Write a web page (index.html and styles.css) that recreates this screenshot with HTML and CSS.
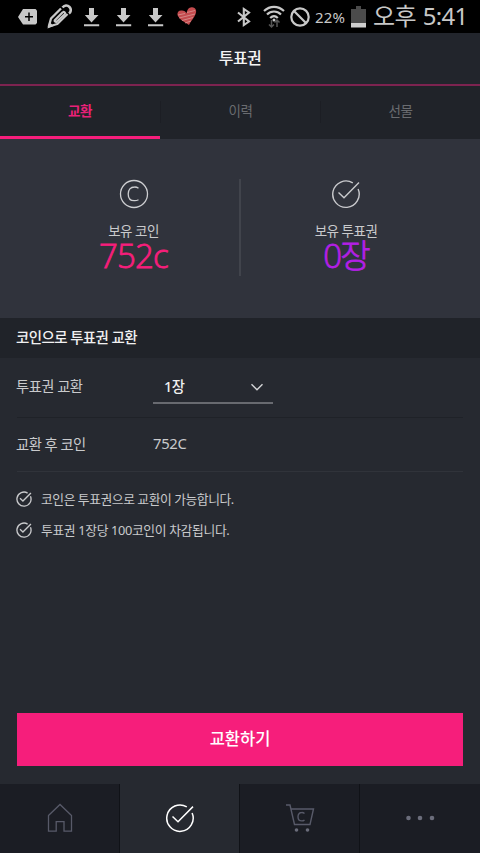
FILE: index.html
```html
<!DOCTYPE html>
<html lang="ko">
<head>
<meta charset="utf-8">
<title>투표권</title>
<link rel="stylesheet" href="styles.css">
</head>
<body>
<svg class="defs" width="0" height="0">
  <symbol id="download" viewBox="0 0 16 20"><path fill="currentColor" d="M5 1h5v7h4.500L7.500 15.500 .8 8H5zM0 17.300h15.200v2H0z"/></symbol>
  <symbol id="check" viewBox="0 0 30 30"><g fill="none" stroke="currentColor"><path d="M21.800 3.900A13.200 13.200 0 1 0 27.100 10"/><path d="M7.500 13.500l5.500 5.200L28 3.600"/></g></symbol>
</svg>
<div class="app">
  <div class="status">
    <div class="status-left">
      <svg width="19" height="16" viewBox="0 0 19 16"><path fill="#c8c8c8" d="M5 0h12.500L19 1.500v12.500l-1.500 1.500H5L0 8z"/><path stroke="#000" stroke-width="1.500" d="M7 7.700h8M11 3.500v8.500"/></svg>
      <svg width="25" height="25" viewBox="0 0 25 25" fill="none" stroke="#c8c8c8" stroke-linejoin="round"><path stroke-width="2.300" d="M14 4.500L4 14.500 1.800 22.500l8.500-2.500L20.500 10"/><path stroke-width="2.200" d="M16 8l-8 8M18 10l-8 7.500M16 8c1-.5 2.500.5 2 2M8 16c-1 1 .5 2.500 2 1.500"/><path stroke-width="2.600" d="M15.500 3.500c2-2.500 5-2.500 7-.5s1.500 5-.5 6.500"/><path d="M.5 24.500l1.800-6.500 4.500 4z" fill="#c8c8c8" stroke="none"/></svg>
      <svg class="dl" width="16" height="20"><use href="#download"/></svg>
      <svg class="dl" width="16" height="20"><use href="#download"/></svg>
      <svg class="dl" width="16" height="20"><use href="#download"/></svg>
      <svg class="heart" width="20" height="19" viewBox="0 0 20 19"><path fill="#c44b4e" d="M12 18C7 15 2 12 .5 8 0 5 2 3 5 3.500c2 0 4 1 4.500 3C10 3 12 0 15 .3c4 .2 5 4 3.500 7C17 11 14 14 12 18z"/><path fill="none" stroke="#dca09d" stroke-width=".7" d="M1 8l7-1.500M10 5.500l8-2M2 11l16-4M5 13.500l11-3M8 16l6-2"/></svg>
    </div>
    <div class="status-right">
      <svg width="14" height="20" viewBox="0 0 14 20"><path fill="none" stroke="#c8c8c8" stroke-width="2.100" d="M1 5.500l11 9L6.800 18V2L12 5.500l-11 9"/></svg>
      <svg class="wifi" width="22" height="24" viewBox="0 0 22 24"><g fill="none" stroke="#c8c8c8" stroke-width="2.200"><path d="M1 6c6-5.500 14-5.500 20 0M4 9.500c4-4 10-4 14 0M7.200 13c2.500-2.500 5.100-2.500 7.600 0"/></g><circle cx="11" cy="15" r="1.500" fill="#c8c8c8"/><path fill="none" stroke="#555" stroke-width="1.500" d="M8.500 15v7M6 19.500L8.500 22l2.500-2.500M14 22v-7M11.500 17.500L14 15l2.500 2.500"/></svg>
      <svg class="ban" width="20" height="20" viewBox="0 0 20 20" fill="none" stroke="#c8c8c8" stroke-width="2.200"><circle cx="10" cy="10" r="8.700"/><path d="M4 4l12 12"/></svg>
      <span class="percent">22%</span>
      <svg class="battery" width="15" height="22" viewBox="0 0 15 22"><path fill="#4b4b4b" d="M5 0h5v3h5v14H0V3h5z"/><path fill="#cfcfcf" d="M0 17h15v4.500H0z"/></svg>
      <span class="clock"><span class="ampm">오후</span>5:41</span>
    </div>
  </div>
  <header class="title"><span>투표권</span></header>
  <nav class="tabs"><span class="tab tab-on">교환</span><i class="tab-line"></i><span class="tab">이력</span><i class="tab-line"></i><span class="tab">선물</span></nav>
  <section class="summary">
    <div class="stat">
      <svg width="30" height="30" viewBox="0 0 30 30" fill="none" stroke="#cdced1" stroke-width="1.300"><circle cx="15" cy="15" r="13.500"/><path d="M19.500 9.300A6.300 6.300 0 0 0 15.500 8C11.500 8 9.200 10.800 9.200 15s2.300 6.700 6 6.700a8 8 0 0 0 4.300-1"/></svg>
      <span class="label">보유 코인</span>
      <span class="value coin">752c</span>
    </div>
    <div class="split"></div>
    <div class="stat">
      <svg class="big-check" width="30" height="30"><use href="#check"/></svg>
      <span class="label">보유 투표권</span>
      <span class="value ticket">0장</span>
    </div>
  </section>
  <h2 class="section"><span>코인으로 투표권 교환</span></h2>
  <main class="content">
    <div class="row first">
      <span class="name">투표권 교환</span>
      <div class="select"><span>1장</span><svg width="14" height="9" viewBox="0 0 14 9" fill="none" stroke="#d4d5d7" stroke-width="1.400"><path d="M1.500 1.200L7 6.800l5.500-5.600"/></svg></div>
    </div>
    <div class="row second"><span class="name">교환 후 코인</span><span class="after">752C</span></div>
    <ul class="notes">
      <li><svg width="16" height="16"><use href="#check"/></svg><span>코인은 투표권으로 교환이 가능합니다.</span></li>
      <li><svg width="16" height="16"><use href="#check"/></svg><span class="note-b">투표권 1장당 100코인이 차감됩니다.</span></li>
    </ul>
    <button class="submit"><span>교환하기</span></button>
  </main>
  <nav class="bottom">
    <div class="item"><svg width="26" height="30" viewBox="0 0 26 30" fill="none" stroke="#585a69" stroke-width="1.300"><path d="M1.500 12.500L13 1.500l11.500 11v15.700H17v-9.500H9.200v9.500H1.500z"/></svg></div>
    <div class="item item-on"><svg width="30" height="30"><use href="#check"/></svg></div>
    <div class="item cart"><svg width="30" height="30" viewBox="0 0 30 30" fill="none" stroke="#585a69" stroke-width="1.400"><path d="M1 2h4l4.500 19.500h15.500L28.500 6H6"/><path d="M19.500 10.500a4 4 0 0 0-2.800-1c-2.300 0-3.700 1.800-3.700 4.200s1.400 4.200 3.700 4.200a4 4 0 0 0 2.800-1"/><g fill="#6b6d7b" stroke="none"><circle cx="11.500" cy="27" r="1.800"/><circle cx="22.500" cy="27" r="1.800"/></g></svg></div>
    <div class="item"><svg width="30" height="6" viewBox="0 0 30 6" fill="#6b6d7b"><circle cx="3.500" cy="3" r="2.300"/><circle cx="15" cy="3" r="2.300"/><circle cx="27" cy="3" r="2.300"/></svg></div>
  </nav>
</div>
</body>
</html>
```
FILE: styles.css
```css
* { box-sizing: border-box; }
body { margin: 0; background: #262930; font-family: "Noto Sans", "Noto Sans CJK KR", sans-serif; }
svg { display: block; flex: none; }
.defs { position: absolute; }
.app { width: 480px; height: 853px; display: flex; flex-direction: column; color: #c9cacc; white-space: nowrap; overflow: hidden; }
.status { height: 33px; background: #000; display: flex; justify-content: space-between; color: #c8c8c8; }
.status-left { display: flex; align-items: center; padding-left: 18px; }
.status-left svg + svg { margin-left: 10px; }
.status-left svg + .dl { margin-left: 12px; }
.status-left .dl + .dl { margin-left: 16px; }
.status-left .dl + .heart { margin-left: 13px; }
.dl { color: #c8c8c8; }
.status-right { width: 243px; display: flex; align-items: center; }
.wifi { margin: 0 4px 0 12px; }
.ban { margin-left: 1px; }
.percent { margin-left: 5px; width: 32px; font-size: 15px; letter-spacing: .2px; }
.battery { margin-left: 4px; }
.clock { margin-left: 7px; font-size: 24px; letter-spacing: -.7px; line-height: 30px; padding-bottom: 2px; }
.ampm { margin-right: 7px; }
.title { height: 53px; padding-bottom: 3px; display: flex; align-items: center; justify-content: center; background: #22252c; border-bottom: 2px solid #7d2350; color: #f5f5f6; font-size: 16px; font-weight: 500; letter-spacing: -.6px; }
.tabs { height: 53px; display: grid; grid-template-columns: 160px 1px 159px 1px 159px; background: #202329; }
.tab-line { height: 22px; margin-top: 15px; background: #1c1e24; }
.tab { display: flex; align-items: center; justify-content: center; padding-bottom: 3px; border-bottom: 3px solid transparent; color: #6a6c70; font-size: 13.500px; letter-spacing: -.4px; }
.tab-on { color: #e92078; border-color: #f61e7b; font-weight: 700; }
.summary { height: 179px; background: #30333c; display: flex; padding-top: 40px; }
.stat { width: 210px; display: flex; flex-direction: column; align-items: center; }
.stat:first-child { width: 239px; padding-left: 28px; }
.split { width: 2px; height: 97px; background: #41444c; }
.big-check { color: #c9cacd; stroke-width: 1.400px; }
.label { margin-top: 12px; font-size: 13.500px; line-height: 20px; letter-spacing: -.5px; }
.value { margin-top: 1px; font-size: 33px; line-height: 28px; font-family: "Open Sans", "Noto Sans CJK KR", sans-serif; font-weight: 300; letter-spacing: -.8px; -webkit-text-stroke: .8px currentColor; }
.coin { color: #f61e7b; }
.ticket { color: #b31fe5; letter-spacing: -1.800px; }
.section { height: 40px; margin: 0; padding: 0 0 3px 16px; display: flex; align-items: center; background: #202329; color: #f0f0f1; font-size: 14.500px; font-weight: 500; letter-spacing: -.6px; }
.content { height: 426px; padding: 0 17px; display: flex; flex-direction: column; background: #262930; }
.row { display: flex; align-items: center; font-size: 14.300px; letter-spacing: -.5px; }
.first { height: 60px; padding-bottom: 4px; border-bottom: 1px solid #1f2228; }
.second { height: 54px; padding-bottom: 3px; border-bottom: 1px solid #30333a; }
.name { width: 137px; margin-left: -1px; }
.after { font-size: 14.800px; letter-spacing: -.3px; }
.select { width: 120px; height: 34px; margin-top: 3px; padding: 0 9px 2px 11px; display: flex; align-items: center; justify-content: space-between; border-bottom: 2px solid #686a70; color: #f0f0f1; font-weight: 500; }
.select svg { margin-top: 4px; }
.notes { list-style: none; margin: 11px 0 0 -1px; padding: 0; font-size: 12.800px; letter-spacing: -.45px; }
.notes li { height: 31.500px; display: flex; align-items: center; gap: 9px; }
.notes span { padding-bottom: 1px; }
.notes .note-b { letter-spacing: -.35px; }
.notes svg { stroke-width: 2.500px; }
.submit { height: 53px; margin: auto 0 18px; padding: 0 0 4px; border: 0; background: #f61e7b; color: #fff; font: 500 16.500px "Noto Sans", "Noto Sans CJK KR", sans-serif; }
.bottom { height: 69px; display: grid; grid-template-columns: repeat(4, 1fr); background: #1b1d24; }
.item { display: flex; align-items: center; justify-content: center; padding-bottom: 1px; border-right: 1px solid #101217; }
.item:last-child { border: 0; }
.item-on { background: #262930; color: #fff; stroke-width: 1.500px; }
.cart { padding-left: 1px; }
```
